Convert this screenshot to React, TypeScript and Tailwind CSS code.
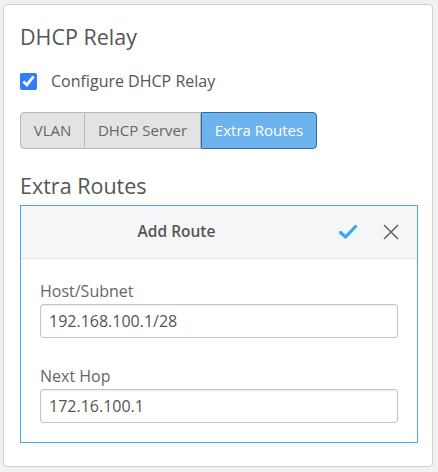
import React, { useState } from 'react';

type Tab = 'vlan' | 'server' | 'routes';

const tabs: { key: Tab; label: string; width: string }[] = [
    { key: 'vlan', label: 'VLAN', width: 'w-[65px]' },
    { key: 'server', label: 'DHCP Server', width: 'w-[116px]' },
    { key: 'routes', label: 'Extra Routes', width: 'w-[116px]' },
];

const CheckIcon = () => (
    <svg width="20" height="16" viewBox="0 0 20 16" fill="none">
        <path d="M2.5 8.5 L7.5 13 L17.5 2.5" stroke="#3aa8ef" strokeWidth="3.2" strokeLinecap="round" strokeLinejoin="round" />
    </svg>
);

const CloseIcon = () => (
    <svg width="18" height="18" viewBox="0 0 18 18" fill="none">
        <path d="M2 2 L16 16 M16 2 L2 16" stroke="#666" strokeWidth="1.6" />
    </svg>
);

const App: React.FC = () => {
    const [enabled, setEnabled] = useState(true);
    const [active, setActive] = useState<Tab>('routes');
    const [host, setHost] = useState('192.168.100.1/28');
    const [hop, setHop] = useState('172.16.100.1');

    return (
        <div className="min-h-[472px] bg-[#f1f1f1] pt-[4px] pl-[3px] font-['Open_Sans',sans-serif] text-[#555]">
            <div className="w-[430px] h-[463px] bg-white border border-[#cfcfcf] rounded-[4px] px-[16px] pt-[18px]">
                <h2 className="text-[21.5px] leading-[28px] text-[#555]">DHCP Relay</h2>

                <label className="mt-[21px] flex items-center gap-[14px] h-[18px] text-[16px] text-[#555]">
                    <input
                        type="checkbox"
                        checked={enabled}
                        onChange={(e) => setEnabled(e.target.checked)}
                        className="w-[17px] h-[17px] accent-[#2f7ef5]"
                    />
                    Configure DHCP Relay
                </label>

                <div className="mt-[22px] flex h-[37px]">
                    {tabs.map((t, i) => {
                        const on = t.key === active;
                        return (
                            <button
                                key={t.key}
                                onClick={() => setActive(t.key)}
                                className={[
                                    t.width,
                                    'h-full text-[15px] border',
                                    on
                                        ? 'bg-[#6db3ee] border-[#2f6aa3] text-white'
                                        : 'bg-[#e3e3e3] border-[#b9b9b9] text-[#666]',
                                    i === 0 ? 'rounded-l-[4px]' : '',
                                    i === tabs.length - 1 ? 'rounded-r-[4px]' : '',
                                    i > 0 && !on ? 'border-l-0' : '',
                                ].join(' ')}
                            >
                                {t.label}
                            </button>
                        );
                    })}
                </div>

                <h2 className="mt-[23px] text-[21.5px] leading-[28px] text-[#555]">Extra Routes</h2>

                <div className="mt-[5px] w-[398px] border border-[#4aa9ec]">
                    <div className="h-[53px] bg-[#f5f6f8] border-b border-[#e4e4e4] flex items-center">
                        <div className="flex-1 text-center pr-[6px] text-[15.5px] font-semibold text-[#555]">Add Route</div>
                        <div className="flex items-center gap-[24px] pr-[17px]">
                            <CheckIcon />
                            <CloseIcon />
                        </div>
                    </div>
                    <div className="px-[19px] pt-[22px] pb-[19px]">
                        <label className="block text-[16px] leading-[20px] text-[#666]">Host/Subnet</label>
                        <input
                            value={host}
                            onChange={(e) => setHost(e.target.value)}
                            className="mt-[3px] w-full h-[34px] px-[8px] text-[16px] text-[#555] border border-[#c4c4c4] rounded-[3px] shadow-[inset_0_1px_2px_rgba(0,0,0,0.08)] outline-none"
                        />
                        <label className="mt-[28px] block text-[16px] leading-[20px] text-[#666]">Next Hop</label>
                        <input
                            value={hop}
                            onChange={(e) => setHop(e.target.value)}
                            className="mt-[3px] w-full h-[34px] px-[8px] text-[16px] text-[#555] border border-[#c4c4c4] rounded-[3px] shadow-[inset_0_1px_2px_rgba(0,0,0,0.08)] outline-none"
                        />
                    </div>
                </div>
            </div>
        </div>
    );
};

export default App;
